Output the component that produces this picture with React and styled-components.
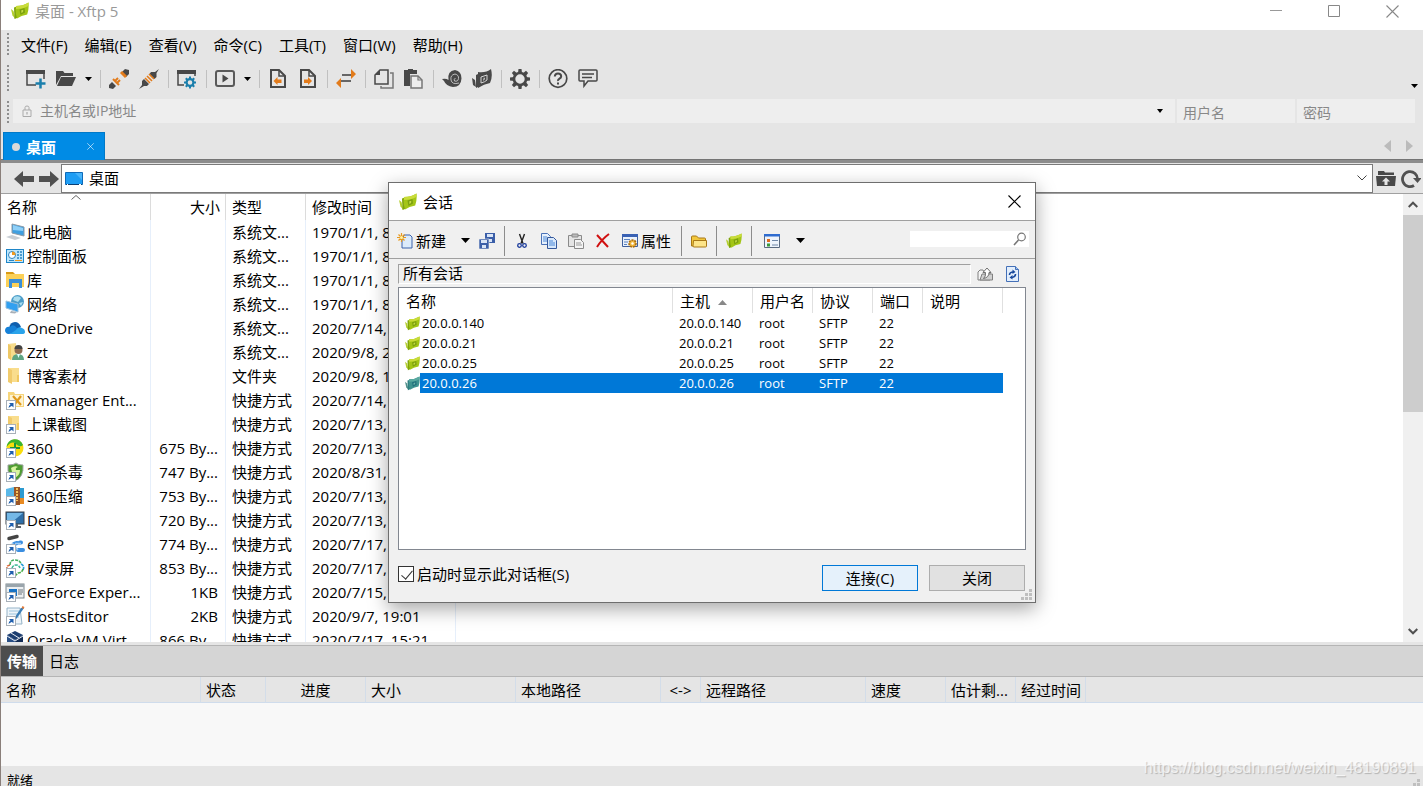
import React, { useState } from 'react';
import styled, { createGlobalStyle } from 'styled-components';

const menus = ['文件(F)', '编辑(E)', '查看(V)', '命令(C)', '工具(T)', '窗口(W)', '帮助(H)'];

const files = [
  { icon: 'computer', name: '此电脑', size: '', type: '系统文...', time: '1970/1/1, 8:00' },
  { icon: 'panel', name: '控制面板', size: '', type: '系统文...', time: '1970/1/1, 8:00' },
  { icon: 'library', name: '库', size: '', type: '系统文...', time: '1970/1/1, 8:00' },
  { icon: 'network', name: '网络', size: '', type: '系统文...', time: '1970/1/1, 8:00' },
  { icon: 'cloud', name: 'OneDrive', size: '', type: '系统文...', time: '2020/7/14,' },
  { icon: 'user', name: 'Zzt', size: '', type: '系统文...', time: '2020/9/8, 2' },
  { icon: 'folder', name: '博客素材', size: '', type: '文件夹', time: '2020/9/8, 1' },
  { icon: 'xmanager', name: 'Xmanager Ent...', size: '', type: '快捷方式', time: '2020/7/14,', link: true },
  { icon: 'folder', name: '上课截图', size: '', type: '快捷方式', time: '2020/7/13,', link: true },
  { icon: 'safe', name: '360', size: '675 By...', type: '快捷方式', time: '2020/7/13,', link: true },
  { icon: 'antivirus', name: '360杀毒', size: '747 By...', type: '快捷方式', time: '2020/8/31,', link: true },
  { icon: 'zip', name: '360压缩', size: '753 By...', type: '快捷方式', time: '2020/7/13,', link: true },
  { icon: 'desk', name: 'Desk', size: '720 By...', type: '快捷方式', time: '2020/7/13,', link: true },
  { icon: 'ensp', name: 'eNSP', size: '774 By...', type: '快捷方式', time: '2020/7/17,', link: true },
  { icon: 'recorder', name: 'EV录屏', size: '853 By...', type: '快捷方式', time: '2020/7/17,', link: true },
  { icon: 'geforce', name: 'GeForce Exper...', size: '1KB', type: '快捷方式', time: '2020/7/15,', link: true },
  { icon: 'hosts', name: 'HostsEditor', size: '2KB', type: '快捷方式', time: '2020/9/7, 19:01', link: true },
  { icon: 'vbox', name: 'Oracle VM Virt...', size: '866 By...', type: '快捷方式', time: '2020/7/17, 15:21' },
];

const sessions = [
  { host: '20.0.0.140', user: 'root', protocol: 'SFTP', port: '22' },
  { host: '20.0.0.21', user: 'root', protocol: 'SFTP', port: '22' },
  { host: '20.0.0.25', user: 'root', protocol: 'SFTP', port: '22' },
  { host: '20.0.0.26', user: 'root', protocol: 'SFTP', port: '22' },
];

const transferColumns = [
  { title: '名称', width: 200 },
  { title: '状态', width: 65 },
  { title: '进度', width: 100, center: true },
  { title: '大小', width: 150 },
  { title: '本地路径', width: 145 },
  { title: '<->', width: 40, center: true },
  { title: '远程路径', width: 165 },
  { title: '速度', width: 80 },
  { title: '估计剩...', width: 70 },
  { title: '经过时间', width: 70 },
];

// the green card used for the app and for every session
const XftpIcon = ({ size = 18, dim }) => (
  <svg width={size} height={size} viewBox="0 0 18 18" aria-hidden="true">
    <path d="M0 7l2.500 2 2 8-3-3.500z" fill={dim ? '#4f8f8a' : '#b4cf2e'} />
    <path d="M3 5.500l3-1v11.500l-2.500 1z" fill={dim ? '#2f7f80' : '#7fa40c'} />
    <path d="M5 4q7 0 12.500-3.500.7 6.500-1.300 12-6 1-10.200 4-2-6-1-12.500z" fill={dim ? '#3f9390' : '#a3c517'} />
    <path d="M5 4q7 0 12.500-3.500l-.2 3.500q-5 3-12.300 3z" fill={dim ? '#5aa9a0' : '#c9dc3a'} />
    <path d="M8.500 7.500l5-1.500.5 4.500-4.500 2.500z" fill={dim ? '#20707c' : '#7ba00e'} />
    <path d="M10.300 8.300l2-.5-.2 2.200-1.800.9z" fill={dim ? '#6cb4aa' : '#c4da45'} />
  </svg>
);

const Caret = ({ w = 7 }) => (
  <svg width={w} height={w === 9 ? 5 : 4} viewBox="0 0 8 4" preserveAspectRatio="none" aria-hidden="true">
    <path d="M0 0h8l-4 4z" fill="#000" />
  </svg>
);

const G = '#484848';
const gearTeeth = [0, 45, 90, 135, 180, 225, 270, 315];

const toolIcons = {
  newSession: (
    <>
      <path d="M1 2v14h9M18 2v8" stroke={G} strokeWidth="1.500" fill="none" />
      <path d="M0 1h19v4H0z" fill={G} />
      <path d="M14.500 9.500v10M9.500 14.500h10" stroke="#1b7fac" strokeWidth="2.500" />
    </>
  ),
  open: (
    <>
      <path d="M0 16V2h7l1.500 2H17v3H5z" fill={G} />
      <path d="M5 8h15l-4 9H1z" fill={G} />
    </>
  ),
  disconnect: (
    <>
      <path d="M13 3l3-3 4 1v4l-3 3z" fill={G} />
      <path d="M12 3l5 5" stroke="#e27b1b" strokeWidth="3" />
      <path d="M0 16l3-3 4 4-3 3-4-1z" fill={G} />
      <path d="M4 10l6 6M6 12l3-3M8 14l3-3" stroke="#e27b1b" strokeWidth="2" />
    </>
  ),
  plug: (
    <>
      <path d="M20 0l-4 3-4 0-1.500 2 5 5 2-2v-4z" fill={G} />
      <path d="M0 20l3-4v-4l2-2 5 5-2 2H5z" fill={G} />
      <path d="M6 9l5 5M8 7l5 5M10 5l5 5" stroke="#e27b1b" strokeWidth="1.600" />
    </>
  ),
  windowGear: (
    <>
      <path d="M1 2v14h6M18 2v5" stroke={G} strokeWidth="1.500" fill="none" />
      <path d="M0 1h19v4H0z" fill={G} />
      <circle cx="13" cy="13.500" r="3.400" fill="none" stroke="#1b7fac" strokeWidth="2.200" />
      {gearTeeth.map((a) => (
        <path key={a} d="M12 7.500h2v2.500h-2z" fill="#1b7fac" transform={`rotate(${a} 13 13.500)`} />
      ))}
    </>
  ),
  play: (
    <>
      <rect x="1" y="2" width="18" height="15" rx="2" fill="none" stroke="#5a5a5a" strokeWidth="2" />
      <path d="M7.500 5.500l6 4-6 4z" fill={G} />
    </>
  ),
  docLeft: (
    <>
      <path d="M3 1h8l6 6v11H3z" fill="none" stroke={G} strokeWidth="2" />
      <path d="M11 1v6h6" fill="none" stroke={G} strokeWidth="1.500" />
      <path d="M5.500 12l4-4v2.500h4v3.500h-4v2z" fill="#e27b1b" />
    </>
  ),
  docRight: (
    <>
      <path d="M3 1h8l6 6v11H3z" fill="none" stroke={G} strokeWidth="2" />
      <path d="M11 1v6h6" fill="none" stroke={G} strokeWidth="1.500" />
      <path d="M14 12l-4-4v2.500H6v3.500h4v2z" fill="#e27b1b" />
    </>
  ),
  transfer: (
    <>
      <path d="M15 0l5 5-5 5zM5 9v10l-5-5z" fill="#e27b1b" />
      <path d="M6 6h9M5 12h10" stroke="#666" strokeWidth="1.800" />
    </>
  ),
  copy: (
    <>
      <path d="M6 1h8v14H1V6z" fill="none" stroke={G} strokeWidth="1.500" />
      <path d="M6 1v5H1z" fill={G} />
      <path d="M16 4h3v15H7v-2" fill="none" stroke="#777" strokeWidth="1.500" />
    </>
  ),
  paste: (
    <>
      <path d="M0 1h4V0h5v1h4v4H6v12H0z" fill={G} />
      <path d="M7 7h7l4 4v8H7z" fill="#eee" stroke="#777" strokeWidth="1.500" />
      <path d="M14 7v4h4" fill="none" stroke="#777" strokeWidth="1.200" />
    </>
  ),
  shell: (
    <>
      <path d="M0 10q4-1 6.500 1Q5 2 13 1q6.500 1 6.500 8.500Q19 18 11 18 4 17 2 12z" fill={G} />
      <path d="M17 14q-7 2-8-3t4-6q4 1 3.500 4.500T12.500 12q-1-2 1-3" fill="none" stroke="#c8c8c8" strokeWidth=".9" />
    </>
  ),
  xftp: (
    <>
      <path d="M0 9l3 2 1 7-3-2z" fill={G} />
      <path d="M4 6l2-1v13l-2 1z" fill={G} />
      <path d="M6 3q8 1 13-3 2 8-1 14-6 1-12 5z" fill={G} />
      <path d="M9 8l6-2v5q-2 2-6 3z" fill="none" stroke="#d5d5d5" strokeWidth="1" />
      <path d="M12 8l1 2-2 2z" fill="#ddd" />
    </>
  ),
  gear: (
    <>
      <circle cx="10" cy="10" r="6" fill="none" stroke={G} strokeWidth="2.600" />
      {gearTeeth.map((a) => (
        <path key={a} d="M8.500 0h3l.5 4H8z" fill={G} transform={`rotate(${a} 10 10)`} />
      ))}
    </>
  ),
  help: (
    <>
      <circle cx="10" cy="9.500" r="8.800" fill="none" stroke={G} strokeWidth="1.700" />
      <path d="M6.800 7.500q.2-3 3.200-3t3.200 2.700q0 1.500-1.700 2.500T10 12" fill="none" stroke={G} strokeWidth="2" />
      <path d="M9 13.500h2v2H9z" fill={G} />
    </>
  ),
  chat: (
    <>
      <path d="M2 1h16q1 0 1 1v9q0 1-1 1h-8l-4 5v-5H2q-1 0-1-1V2q0-1 1-1z" fill="none" stroke={G} strokeWidth="1.500" />
      <path d="M4 5h12M4 8.500h10" stroke={G} strokeWidth="1.300" />
    </>
  ),
  back: <path d="M0 10l9-8v5h11v6H9v5z" fill="#505050" />,
  forward: <path d="M20 10l-9-8v5H0v6h11v5z" fill="#505050" />,
  folderUp: (
    <>
      <path d="M2 2h6l1 1.500h9V6H2z" fill={G} />
      <path d="M0 7h20l-1 10H1z" fill={G} />
      <path d="M10 8.500l4 4h-2.500v3.500h-3v-3.500H6z" fill="#e5e5e5" />
    </>
  ),
  refresh: (
    <>
      <path d="M16.500 10.500A7.500 7.500 0 1 0 13 16.500" fill="none" stroke="#505050" strokeWidth="2.800" />
      <path d="M12 9h8.500l-4 5z" fill="#505050" />
    </>
  ),
};

const ToolIcon = ({ name }) => (
  <svg width="20" height="20" viewBox="0 0 20 20" aria-hidden="true">{toolIcons[name]}</svg>
);

const fileIcons = {
  computer: (
    <>
      <path d="M7 2l12 3v9L7 11z" fill="#3f9fe0" stroke="#8a9aa8" />
      <path d="M8 3l10 3v3L8 8z" fill="#8fd0f8" />
      <path d="M1 15l6-2 9 3-6 2z" fill="#c8ced4" />
    </>
  ),
  panel: (
    <>
      <rect x="1" y="3" width="18" height="14" fill="#1f86c8" />
      <rect x="2" y="4" width="16" height="12" fill="#bfe6fb" />
      <circle cx="7" cy="9" r="3.500" fill="#fff" stroke="#2c84c0" />
      <path d="M7 9V5.500A3.500 3.500 0 0 1 10.500 9z" fill="#f29a1c" />
      <path d="M12 6h2M15 6h2M12 9h2M15 9h2M12 12h2M15 12h2" stroke="#2c84c0" strokeWidth="1.500" />
      <path d="M4 14.500h5" stroke="#2c84c0" /><path d="M10 14.500h7" stroke="#f29a1c" />
    </>
  ),
  library: (
    <>
      <path d="M1 2h7l2 2h-9z" fill="#d99a16" />
      <path d="M1 4h18v13H1z" fill="#fbd058" />
      <path d="M4 18v-9h13v9h-3v-5H7v5z" fill="#3a8fd8" />
    </>
  ),
  network: (
    <>
      <circle cx="12.500" cy="7.500" r="6.500" fill="#4b9cc8" />
      <path d="M9 3q5-2 7 1l-3 4-5-2zM14 9l4-1-2 4z" fill="#a9dcee" />
      <path d="M1 7l12 3v8L1 14z" fill="#32a0f0" stroke="#9ac0dc" />
      <path d="M6 17l6 1-2 1.500-5-.5z" fill="#a8b0b8" />
    </>
  ),
  cloud: (
    <>
      <path d="M4 10q1-6 6-6 4 0 6 5l-6 4z" fill="#0f5fae" />
      <path d="M3 16q-3-1-3-4 1-4 5-3 2-3 5-1l7 7z" fill="#1681d8" />
      <path d="M5 16l6-4q2-4 6-2 3 1 3 4 0 2-3 2z" fill="#2aa3ea" />
    </>
  ),
  user: (
    <>
      <path d="M3 2l8-1v15l-5 2-3-2z" fill="#f7dc8c" /><path d="M3 2l3 2v14l-3-2z" fill="#eec764" />
      <circle cx="13.500" cy="8" r="4" fill="#8f6b50" /><path d="M9.500 7q0-4 4-4t4 4z" fill="#444" />
      <path d="M7 18q0-6 6-6t6 6z" fill="#5fa583" /><path d="M12 12h3l-1.500 4z" fill="#dff" />
    </>
  ),
  folder: (
    <>
      <path d="M3 2h11v14H3z" fill="#f9dd8d" /><path d="M3 2l4 2v14l-4-2z" fill="#f1cb6c" />
      <path d="M12 9h2v7h-2z" fill="#f0c75f" />
    </>
  ),
  xmanager: (
    <>
      <path d="M3 2h6l1 2h9v13H3z" fill="#f6d57b" /><path d="M5 5h13v11H5z" fill="#fdf3d2" />
      <path d="M8 6l8 9M16 6l-7 9" stroke="#e09a1c" strokeWidth="2.200" />
    </>
  ),
  safe: (
    <>
      <circle cx="10" cy="10" r="8.500" fill="#f9dc0c" />
      <path d="M1.500 9A8.500 8.500 0 0 1 18 7q-3 3-7-1T1.500 9z" fill="#3bb32f" />
      <path d="M10 5v10M5 10h10" stroke="#17963c" strokeWidth="2" />
    </>
  ),
  antivirus: (
    <>
      <path d="M3 3q6 0 8-2 2 2 7 2 1 12-8 16Q2 15 3 3z" fill="#4f9c33" stroke="#9da4a0" />
      <path d="M6 6q4-3 7-1-3 1-2 3h4q0 6-6 8 2-5-2-6z" fill="#d8f4a0" />
    </>
  ),
  zip: (
    <>
      <path d="M1 3l8-2v17H1z" fill="#5ab8e8" /><path d="M12 2h7v16h-7z" fill="#2c9ad0" />
      <path d="M1 12h18v6H1z" fill="#e88a22" /><path d="M9 1h6v18H9z" fill="#9a5626" />
      <path d="M12 2v13" stroke="#f5c25b" strokeWidth="2" strokeDasharray="2 1" />
    </>
  ),
  desk: (
    <>
      <rect x="1" y="2" width="18" height="12" fill="#2f6fa8" stroke="#384048" />
      <path d="M2 3h16L6 13H2z" fill="#74b8e6" />
      <path d="M8 14h5v2h3v2H6v-2h2z" fill="#5c646c" />
    </>
  ),
  ensp: (
    <>
      <path d="M4 4.500l8-2" stroke="#444" strokeWidth="3.500" strokeLinecap="round" />
      <path d="M9 10l3-1M15 8.500l1 0M13 16l5 0" stroke="#3b8ee0" strokeWidth="4" strokeLinecap="round" />
      <path d="M7 9l6 7M10 9.500h6" stroke="#9cc9f3" strokeWidth="1.600" />
    </>
  ),
  recorder: (
    <g fill="none" strokeWidth="1.600" strokeDasharray="3 1">
      <path d="M5 7q0-5 5-5t6 4" stroke="#3fae5c" /><path d="M3 12q-3-4 2-5" stroke="#d86a3a" />
      <path d="M16 6q4 2 2 6" stroke="#2b9fd8" /><path d="M18 11q-1 4-5 4l-3 3" stroke="#4aae4c" />
      <path d="M7 10q1-3 4-3t4 3" stroke="#3bb894" />
    </g>
  ),
  geforce: (
    <>
      <rect x="1" y="2" width="18" height="14" fill="#eceff1" stroke="#7d878e" />
      <path d="M1 2h18v3H1z" fill="#9aa5ac" /><path d="M4 7h8v7H4z" fill="#1873c5" />
      <path d="M13 8h5M13 10h5M13 12h4" stroke="#6b757c" />
    </>
  ),
  hosts: (
    <>
      <path d="M2 2h13l2 16H2z" fill="#eef5fa" stroke="#96b4c8" />
      <path d="M4 5h10M4 8h10M4 11h10" stroke="#9cc4dc" />
      <path d="M19 2l-7 10-3 3 1-4 6-9z" fill="#3b7fb8" /><path d="M17 1l2 1" stroke="#e07a3a" strokeWidth="2" />
    </>
  ),
  vbox: (
    <>
      <path d="M2 5l8-4 8 4-8 5z" fill="#1d3e70" /><path d="M2 5l8 5v9l-8-5z" fill="#294f86" />
      <path d="M18 5l-8 5v9l8-5z" fill="#122b54" /><path d="M2 6l8 5 8-5M6 3l8 5" stroke="#e8eef6" fill="none" />
    </>
  ),
};

const FileIcon = ({ name, link }) => (
  <svg width="20" height="20" viewBox="0 0 20 20" aria-hidden="true">
    {fileIcons[name]}
    {link && (
      <>
        <rect x="1.500" y="10.500" width="9" height="9" fill="#fff" stroke="#a8b0b8" />
        <path d="M4 13h4.500v4.500zM3.500 18q0-2.500 2.500-4l1.500 1.500q-2.500 1-4 2.500z" fill="#1f5fae" />
      </>
    )}
  </svg>
);

const dialogIcons = {
  new: (
    <>
      <path d="M7 2h6l2 2v11H5V7z" fill="#dcebfb" stroke="#3b62ac" />
      <path d="M4.500 0v9M0 4.500h9M1.500 1.500l6 6M7.500 1.500l-6 6" stroke="#e89a20" strokeWidth="1.200" />
      <circle cx="4.500" cy="4.500" r="1.500" fill="#fff3a0" />
    </>
  ),
  save: (
    <>
      <path d="M6 0h10v10H6z" fill="#3a5ea8" /><path d="M8 1h6v3H8zM9 6h4v3H9z" fill="#d8e4f6" />
      <path d="M0 6h10v10H0z" fill="#3a5ea8" stroke="#f0f0f0" strokeWidth=".6" /><path d="M2 7h6v3H2zM3 12h4v3H3z" fill="#d8e4f6" />
    </>
  ),
  cut: (
    <>
      <path d="M5.500 1l3.500 9.500M10.500 1L7 10.500" stroke="#222" strokeWidth="1.400" />
      <circle cx="5.500" cy="12.500" r="1.800" fill="none" stroke="#1c3c9c" strokeWidth="1.300" />
      <circle cx="10.500" cy="12.500" r="1.800" fill="none" stroke="#1c3c9c" strokeWidth="1.300" />
    </>
  ),
  copy: (
    <>
      <path d="M.5.5h6l3 3v8h-9z" fill="#e6f0fc" stroke="#4a72b8" /><path d="M2 4h4M2 6h5M2 8h5" stroke="#4a88d8" />
      <path d="M6.500 4.500h6l3 3v8h-9z" fill="#d8e8fb" stroke="#34589c" /><path d="M8 8h4M8 10h6M8 12h6" stroke="#4a88d8" />
    </>
  ),
  paste: (
    <>
      <path d="M.5 2.500h13v11H.5z" fill="#e4e4e4" stroke="#8a8a8a" /><path d="M4 1h6v3H4z" fill="#bbb" stroke="#8a8a8a" />
      <path d="M6.500 6.500h6l3 3v6h-9z" fill="#f4f4f4" stroke="#8a8a8a" /><path d="M8 10h5M8 12h6" stroke="#999" />
    </>
  ),
  remove: <path d="M2 2l11 12M14 1Q7 6 2 14" stroke="#d01010" strokeWidth="2" fill="none" />,
  props: (
    <>
      <path d="M.5 1.500h15v12H.5z" fill="#eaf2fc" stroke="#40609c" /><path d="M0 1h16v3H0z" fill="#3a62b4" />
      <path d="M2 6.500h6M2 9h4M2 11.500h3" stroke="#5c82c0" />
      <circle cx="10.500" cy="10.500" r="3.500" fill="#f0b63c" stroke="#a86a12" strokeDasharray="2 1" strokeWidth="1.600" />
      <circle cx="10.500" cy="10.500" r="1.200" fill="#fff" />
    </>
  ),
  folder: (
    <>
      <path d="M.5 13V4q0-1 1-1h4l2 2h6q1 0 1 1v7z" fill="#f2c73c" stroke="#a87818" />
      <path d="M2.500 7.500h13V13q0 1-1 1H3q-1 0-1-1z" fill="#fde58a" stroke="#a87818" />
    </>
  ),
  list: (
    <>
      <path d="M.5 1.500h15v13H.5z" fill="#eef4fc" stroke="#5a6a80" /><path d="M0 1h16v2.500H0z" fill="#2f6cd0" />
      <path d="M3 6h3v3H3z" fill="#e06a1c" /><path d="M3 10.500h3v3H3z" fill="#3a9a3a" />
      <path d="M8 7.500h6M8 12h6" stroke="#7088a8" />
    </>
  ),
  up: (
    <>
      <path d="M1 14V6l2-2h3l1 2h6v8z" fill="#f4f4f4" stroke="#808080" />
      <path d="M3 14l2-6h10.500v6z" fill="#d0d0d0" stroke="#808080" />
      <path d="M10 2l4 4.500h-2q0 5-5.500 6 2.500-2 2-6H6z" fill="#fff" stroke="#707070" />
    </>
  ),
  reload: (
    <>
      <path d="M2.500.5h9l3 3v12h-12z" fill="#e2eefc" stroke="#4470b8" /><path d="M11.500.5v3h3" fill="#9cc0ee" stroke="#4470b8" />
      <path d="M5.500 9q0-3 4-3M11.500 8q0 3-4 3.500" stroke="#17489c" strokeWidth="1.600" fill="none" />
      <path d="M8.500 3.500l3 2.500-3 2zM8.500 9l-3 2.500 3 2z" fill="#17489c" />
    </>
  ),
};

const SmallIcon = ({ name }) => (
  <svg width="16" height="16" viewBox="0 0 16 16" aria-hidden="true">{dialogIcons[name]}</svg>
);

const CloseGlyph = ({ size = 13, color = '#000' }) => (
  <svg width={size} height={size} viewBox="0 0 13 13" aria-hidden="true">
    <path d="M.5.5l12 12M12.500.5l-12 12" stroke={color} strokeWidth="1.100" />
  </svg>
);

const Tool = ({ name, label }) => (
  <ToolButton aria-label={label}><ToolIcon name={name} /></ToolButton>
);

const GripCorner = () => (
  <ResizeGrip width="11" height="11" viewBox="0 0 11 11" aria-hidden="true">
    <path d="M8 0h3v3H8zM8 4h3v3H8zM8 8h3v3H8zM4 4h3v3H4zM4 8h3v3H4zM0 8h3v3H0z" fill="#bfbfbf" />
  </ResizeGrip>
);

const SessionDialog = () => {
  const [selected, setSelected] = useState(3);
  const [showOnStart, setShowOnStart] = useState(true);

  return (
    <Overlay>
      <Dialog role="dialog" aria-label="会话">
        <DialogTitle>
          <XftpIcon />
          <h2>会话</h2>
          <PlainButton aria-label="关闭"><CloseGlyph /></PlainButton>
        </DialogTitle>
        <DialogToolbar>
          <TextButton><SmallIcon name="new" />新建</TextButton>
          <CaretButton $left={15} aria-label="新建"><Caret w={9} /></CaretButton>
          <IconButton aria-label="保存"><SmallIcon name="save" /></IconButton>
          <DialogSeparator />
          <IconButton aria-label="剪切"><SmallIcon name="cut" /></IconButton>
          <IconButton aria-label="复制"><SmallIcon name="copy" /></IconButton>
          <IconButton aria-label="粘贴"><SmallIcon name="paste" /></IconButton>
          <IconButton aria-label="删除"><SmallIcon name="remove" /></IconButton>
          <TextButton $pad={6}><SmallIcon name="props" />属性</TextButton>
          <DialogSeparator />
          <IconButton aria-label="文件夹"><SmallIcon name="folder" /></IconButton>
          <DialogSeparator />
          <IconButton aria-label="Xftp"><XftpIcon size={16} /></IconButton>
          <DialogSeparator />
          <IconButton $wide aria-label="列表"><SmallIcon name="list" /></IconButton>
          <CaretButton $left={7} aria-label="列表"><Caret w={9} /></CaretButton>
          <SearchBox>
            <input aria-label="搜索" />
            <svg width="14" height="14" viewBox="0 0 14 14" aria-hidden="true">
              <circle cx="8.500" cy="5" r="3.800" fill="none" stroke="#777" strokeWidth="1.200" />
              <path d="M5.500 8L1 13" stroke="#777" strokeWidth="1.600" />
            </svg>
          </SearchBox>
        </DialogToolbar>
        <PathRow>
          <PathLabel>所有会话</PathLabel>
          <IconButton aria-label="向上"><SmallIcon name="up" /></IconButton>
          <IconButton aria-label="刷新"><SmallIcon name="reload" /></IconButton>
        </PathRow>
        <SessionBox>
          <SessionTable>
            <colgroup>
              <col width="274" /><col width="80" /><col width="60" /><col width="60" /><col width="50" /><col width="80" />
            </colgroup>
            <thead>
              <tr>
                <th>名称</th>
                <th>
                  主机
                  <svg width="9" height="5" viewBox="0 0 9 5" aria-hidden="true"><path d="M0 5h9L4.500 0z" fill="#888" /></svg>
                </th>
                <th>用户名</th>
                <th>协议</th>
                <th>端口</th>
                <th>说明</th>
              </tr>
            </thead>
            <tbody>
              {sessions.map((s, i) => (
                <SessionRow key={s.host} $selected={i === selected} onClick={() => setSelected(i)}>
                  <td>
                    <SessionName $selected={i === selected}>
                      <XftpIcon size={15} dim={i === selected} />
                      <span>{s.host}</span>
                    </SessionName>
                  </td>
                  <td>{s.host}</td>
                  <td>{s.user}</td>
                  <td>{s.protocol}</td>
                  <td>{s.port}</td>
                  <td />
                </SessionRow>
              ))}
            </tbody>
          </SessionTable>
        </SessionBox>
        <DialogFooter>
          <CheckLabel>
            <input type="checkbox" checked={showOnStart} onChange={(e) => setShowOnStart(e.target.checked)} />
            启动时显示此对话框(S)
          </CheckLabel>
          <DialogButton $primary>连接(C)</DialogButton>
          <DialogButton>关闭</DialogButton>
        </DialogFooter>
        <GripCorner />
      </Dialog>
    </Overlay>
  );
};

const App = () => {
  const [host, setHost] = useState('');
  return (
    <Window>
      <GlobalStyle />
      <TitleBar>
        <XftpIcon />
        <h1>桌面 - Xftp 5</h1>
        <WindowButton aria-label="最小化">
          <svg width="13" height="13" viewBox="0 0 13 13" aria-hidden="true"><path d="M0 5.500h12" stroke="#999" /></svg>
        </WindowButton>
        <WindowButton aria-label="最大化">
          <svg width="13" height="13" viewBox="0 0 13 13" aria-hidden="true"><path d="M.5.5h11v11H.5z" fill="none" stroke="#888" /></svg>
        </WindowButton>
        <WindowButton aria-label="关闭"><CloseGlyph color="#888" /></WindowButton>
      </TitleBar>

      <MenuBar>
        <Grip />
        {menus.map((m) => <MenuButton key={m}>{m}</MenuButton>)}
      </MenuBar>

      <Toolbar>
        <Grip />
        <Tool name="newSession" label="新建" />
        <Tool name="open" label="打开" />
        <ToolCaret aria-label="打开"><Caret /></ToolCaret>
        <Separator />
        <Tool name="disconnect" label="断开" />
        <Tool name="plug" label="重新连接" />
        <Separator />
        <Tool name="windowGear" label="属性" />
        <Separator />
        <Tool name="play" label="运行" />
        <ToolCaret aria-label="运行"><Caret /></ToolCaret>
        <Separator />
        <Tool name="docLeft" label="下载" />
        <Tool name="docRight" label="上传" />
        <Separator />
        <Tool name="transfer" label="传输" />
        <Separator />
        <Tool name="copy" label="复制" />
        <Tool name="paste" label="粘贴" />
        <Separator />
        <Tool name="shell" label="Xshell" />
        <Tool name="xftp" label="Xftp" />
        <Separator />
        <Tool name="gear" label="选项" />
        <Separator />
        <Tool name="help" label="帮助" />
        <Tool name="chat" label="反馈" />
        <Overflow aria-label="更多"><Caret /></Overflow>
      </Toolbar>

      <ConnectBar>
        <Grip />
        <HostField>
          <svg width="10" height="12" viewBox="0 0 10 12" aria-hidden="true">
            <path d="M1 5h8v6.500H1zM3 5V2.500q0-1.500 2-1.500t2 1.500V5" fill="none" stroke="#aaa" />
            <path d="M4.500 7h1v2.500h-1z" fill="#999" />
          </svg>
          <input
            aria-label="主机名或IP地址"
            placeholder="主机名或IP地址"
            value={host}
            onChange={(e) => setHost(e.target.value)}
          />
          <PlainButton aria-label="历史"><Caret w={6} /></PlainButton>
        </HostField>
        <SmallField aria-label="用户名" placeholder="用户名" />
        <SmallField aria-label="密码" placeholder="密码" type="password" />
      </ConnectBar>

      <TabStrip>
        <Tab>
          <Dot />
          <span>桌面</span>
          <PlainButton aria-label="关闭"><CloseGlyph size={7} color="#fff" /></PlainButton>
        </Tab>
        <TabScroll>
          <PlainButton aria-label="左">
            <svg width="7" height="12" viewBox="0 0 7 12" aria-hidden="true"><path d="M7 0v12L0 6z" fill="#bbb" /></svg>
          </PlainButton>
          <PlainButton aria-label="右">
            <svg width="7" height="12" viewBox="0 0 7 12" aria-hidden="true"><path d="M0 0v12l7-6z" fill="#bbb" /></svg>
          </PlainButton>
        </TabScroll>
      </TabStrip>

      <NavBar>
        <NavButton aria-label="后退"><ToolIcon name="back" /></NavButton>
        <NavButton aria-label="前进"><ToolIcon name="forward" /></NavButton>
        <Location>
          <svg width="18" height="13" viewBox="0 0 18 13" aria-hidden="true">
            <path d="M.5.5h17v12H.5z" fill="#1e9df4" stroke="#0f6ab8" />
            <path d="M10 1h7v7z" fill="#48b4fa" />
            <path d="M1 12.500h16" stroke="#0a3f74" /><path d="M2 12.500h1M14 12.500h2" stroke="#fff" />
          </svg>
          <select aria-label="位置"><option>桌面</option></select>
          <svg width="10" height="6" viewBox="0 0 10 6" aria-hidden="true">
            <path d="M.5.5L5 5 9.500.5" fill="none" stroke="#444" />
          </svg>
        </Location>
        <NavButton aria-label="上一级"><ToolIcon name="folderUp" /></NavButton>
        <NavButton aria-label="刷新"><ToolIcon name="refresh" /></NavButton>
      </NavBar>

      <FilePane>
        <FileScroll>
          <FileTable>
            <colgroup><col width="150" /><col width="75" /><col width="80" /><col width="150" /></colgroup>
            <thead>
              <tr>
                <th>
                  名称
                  <SortMark width="10" height="5" viewBox="0 0 10 5" aria-hidden="true">
                    <path d="M.5 4.500L5 .5l4.500 4" fill="none" stroke="#666" />
                  </SortMark>
                </th>
                <th>大小</th>
                <th>类型</th>
                <th>修改时间</th>
              </tr>
            </thead>
            <tbody>
              {files.map((f) => (
                <tr key={f.name}>
                  <td><FileName><FileIcon name={f.icon} link={f.link} />{f.name}</FileName></td>
                  <td>{f.size}</td>
                  <td>{f.type}</td>
                  <td>{f.time}</td>
                </tr>
              ))}
            </tbody>
          </FileTable>
        </FileScroll>
        <ScrollBar>
          <PlainButton aria-label="向上滚动">
            <svg width="10" height="7" viewBox="0 0 10 7" aria-hidden="true"><path d="M.7 6L5 1.700 9.300 6" fill="none" stroke="#505050" strokeWidth="2" /></svg>
          </PlainButton>
          <Thumb />
          <PlainButton aria-label="向下滚动">
            <svg width="10" height="7" viewBox="0 0 10 7" aria-hidden="true"><path d="M.7 1L5 5.300 9.300 1" fill="none" stroke="#505050" strokeWidth="2" /></svg>
          </PlainButton>
        </ScrollBar>
      </FilePane>

      <BottomTabs>
        <BottomTab $active>传输</BottomTab>
        <BottomTab>日志</BottomTab>
      </BottomTabs>
      <TransferPane>
        <TransferTable>
          <colgroup>
            {transferColumns.map((c) => <col key={c.title} width={c.width} />)}
            <col />
          </colgroup>
          <thead>
            <tr>
              {transferColumns.map((c) => <TransferHead key={c.title} $center={c.center}>{c.title}</TransferHead>)}
              <td />
            </tr>
          </thead>
        </TransferTable>
      </TransferPane>
      <StatusBar>
        就绪
        <GripCorner />
      </StatusBar>
      <Watermark>https://blog.csdn.net/weixin_48190891</Watermark>
      <SessionDialog />
    </Window>
  );
};

export default App;

const GlobalStyle = createGlobalStyle`
  *{
    box-sizing:border-box;
  }
  body{
    margin:0;
    font-family:"Open Sans", "Noto Sans CJK SC", sans-serif;
    font-size:15px;
    line-height:20px;
    color:#000;
    overflow:hidden;
  }
  h1, h2{
    margin:0;
    font-size:15px;
    font-weight:normal;
  }
  button, input, select{
    font:inherit;
    color:inherit;
    border:none;
    padding:0;
    background:none;
    border-radius:0;
    outline:none;
  }
  svg{
    display:block;
    flex-shrink:0;
  }
`

const Window = styled.div`
  position:relative;
  display:flex;
  flex-direction:column;
  height:100vh;
  background-color:#e5e5e5;
  border-left:1px solid #8a7f7a;
  overflow:hidden;
`

const TitleBar = styled.header`
  display:flex;
  align-items:center;
  height:30px;
  padding:0 2px 8px 10px;
  background-color:white;
  color:#999;
  h1{
    flex:1;
    padding-left:6px;
  }
`

const PlainButton = styled.button`
  display:flex;
  align-items:center;
  justify-content:center;
`

const WindowButton = styled(PlainButton)`
  width:58px;
  height:22px;
`

const Grip = styled.span`
  width:2px;
  align-self:stretch;
  margin:3px 12px 3px 6px;
  background:repeating-linear-gradient(#8e8e8e 0 2px, transparent 2px 4px);
`

const MenuBar = styled.nav`
  display:flex;
  align-items:center;
  height:32px;
  padding-bottom:2px;
`

const MenuButton = styled.button`
  margin-right:17px;
  white-space:nowrap;
`

const Toolbar = styled.div`
  display:flex;
  align-items:center;
  height:34px;
`

const ToolButton = styled(PlainButton)`
  width:30px;
  height:30px;
`

const ToolCaret = styled(PlainButton)`
  width:15px;
  height:30px;
`

const Separator = styled.span`
  width:8px;
  height:18px;
  background:linear-gradient(#c0c0c0, #c0c0c0) center / 1px 100% no-repeat;
`

const Overflow = styled(PlainButton)`
  align-self:flex-end;
  height:20px;
  margin:0 5px 0 auto;
`

const ConnectBar = styled.div`
  display:flex;
  gap:2px;
  height:32px;
  padding:3px 8px 5px 0;
  font-size:14px;
  ${Grip}{
    margin:2px 2px 0 6px;
  }
  input::placeholder{
    color:#888;
    opacity:1;
  }
`

const HostField = styled.div`
  display:flex;
  flex:1;
  align-items:center;
  padding:0 12px 0 9px;
  background-color:#eee;
  input{
    flex:1;
    padding-left:8px;
  }
`

const SmallField = styled.input`
  width:118px;
  padding:4px 6px 0;
  background-color:#eee;
`

const TabStrip = styled.div`
  display:flex;
  align-items:flex-end;
  justify-content:space-between;
  height:35px;
  padding-left:2px;
  border-bottom:3px solid #8c8c8c;
  box-shadow:inset 0 -1px #747474;
`

const Tab = styled.div`
  display:flex;
  align-items:center;
  width:102px;
  height:28px;
  padding:0 10px 0 8px;
  border:1px solid #0079c8;
  border-bottom:none;
  background-color:#008be5;
  color:white;
  font-weight:bold;
  span{
    flex:1;
  }
`

const Dot = styled.i`
  width:8px;
  height:8px;
  margin-right:6px;
  border-radius:50%;
  background-color:#d9d9d9;
`

const TabScroll = styled.div`
  display:flex;
  gap:15px;
  padding:0 10px 8px;
`

const NavBar = styled.div`
  display:flex;
  align-items:center;
  height:31px;
  padding:1px 0 0 10px;
  border-bottom:1px solid #a0a0a0;
`

const NavButton = styled(PlainButton)`
  width:25px;
  height:28px;
`

const Location = styled.div`
  display:flex;
  flex:1;
  align-items:center;
  align-self:stretch;
  padding:0 5px 1px 3px;
  border:1px solid #7a7a7a;
  background-color:white;
  select{
    flex:1;
    padding-left:6px;
    appearance:none;
  }
`

const FilePane = styled.main`
  display:flex;
  flex:1;
  min-height:0;
  background-color:white;
`

const FileScroll = styled.div`
  flex:1;
  overflow:hidden;
`

const FileTable = styled.table`
  width:455px;
  table-layout:fixed;
  border-spacing:0;
  th, td{
    height:24px;
    padding:0 6px;
    border-right:1px solid #e6effb;
    text-align:left;
    font-weight:normal;
    white-space:nowrap;
    overflow:hidden;
  }
  th{
    position:relative;
    height:26px;
    border-right-color:#dcdcdc;
  }
  td:first-child{
    padding:0 0 0 4px;
  }
  th:nth-child(2), td:nth-child(2){
    padding-right:7px;
    text-align:right;
  }
  th:nth-child(2){
    padding-right:5px;
  }
`

const SortMark = styled.svg`
  position:absolute;
  top:1px;
  left:calc(50% - 5px);
`

const FileName = styled.div`
  display:flex;
  align-items:center;
  gap:2px;
`

const ScrollBar = styled.div`
  display:flex;
  flex-direction:column;
  width:20px;
  background-color:#f0f0f0;
  button{
    height:21px;
  }
  button:last-child{
    margin-top:auto;
  }
`

const Thumb = styled.div`
  height:44%;
  background-color:#cdcdcd;
`

const BottomTabs = styled.div`
  display:flex;
  height:35px;
  border-top:3px solid #e5e5e5;
  border-bottom:1px solid #b5b5b5;
  background-color:#d5d5d5;
  box-shadow:inset 0 1px #b5b5b5;
`

const BottomTab = styled.button`
  min-width:42px;
  padding:0 6px;
  margin-top:1px;
  background-color:${(props) => (props.$active ? '#4d4d4d' : 'transparent')};
  color:${(props) => (props.$active ? 'white' : 'black')};
  font-weight:${(props) => (props.$active ? 'bold' : 'normal')};
`

const TransferPane = styled.section`
  height:89px;
  background-color:#f8f8f8;
`

const TransferTable = styled.table`
  width:100%;
  table-layout:fixed;
  border-spacing:0;
  background-color:#e5e5e5;
  th, td{
    height:26px;
    border-bottom:1px solid #cfdcec;
  }
`

const TransferHead = styled.th`
  padding:0 5px;
  border-right:1px solid #d3dde9;
  text-align:${(props) => (props.$center ? 'center' : 'left')};
  font-weight:normal;
  white-space:nowrap;
`

const StatusBar = styled.footer`
  position:relative;
  height:20px;
  padding:5px 6px 0;
  font-size:13px;
  line-height:18px;
  overflow:hidden;
  > svg{
    bottom:-4px;
  }
`

const Watermark = styled.div`
  position:absolute;
  right:7px;
  bottom:8px;
  font-family:"Liberation Sans", Arial, sans-serif;
  font-size:16px;
  color:rgba(255, 255, 255, 0.7);
  text-shadow:1px 1px 1px rgba(0, 0, 0, 0.22);
`

const Overlay = styled.div`
  position:absolute;
  inset:0;
  display:flex;
  align-items:center;
  justify-content:center;
  padding-bottom:1px;
`

const Dialog = styled.section`
  position:relative;
  width:648px;
  border:1px solid #6e6e6e;
  background-color:#f0f0f0;
  box-shadow:0 6px 18px rgba(0, 0, 0, 0.35);
`

const DialogTitle = styled.div`
  display:flex;
  align-items:center;
  height:38px;
  padding:0 14px 0 10px;
  border-bottom:1px solid #a0a0a0;
  background-color:white;
  h2{
    flex:1;
    padding-left:6px;
  }
`

const DialogToolbar = styled.div`
  display:flex;
  align-items:center;
  height:38px;
  padding:2px 6px 0 8px;
  border-bottom:1px solid #a0a0a0;
`

const TextButton = styled.button`
  display:flex;
  align-items:center;
  gap:3px;
  padding:0 ${(props) => props.$pad || 0}px;
  white-space:nowrap;
`

const CaretButton = styled(PlainButton)`
  height:24px;
  padding:0 3px 0 ${(props) => props.$left}px;
`

const IconButton = styled(PlainButton)`
  width:${(props) => (props.$wide ? 34 : 27)}px;
  height:24px;
`

const DialogSeparator = styled.span`
  width:8px;
  height:30px;
  background:linear-gradient(#8c8c8c, #8c8c8c) center / 1px 100% no-repeat;
`

const SearchBox = styled.div`
  display:flex;
  align-items:center;
  width:119px;
  height:16px;
  margin:0 0 4px auto;
  padding-right:2px;
  background-color:white;
  input{
    flex:1;
    min-width:0;
    height:16px;
    font-size:12px;
  }
`

const PathRow = styled.div`
  display:flex;
  align-items:center;
  height:28px;
  padding:5px 10px 3px 9px;
`

const PathLabel = styled.div`
  flex:1;
  height:20px;
  padding-left:4px;
  border:1px solid;
  border-color:#a0a0a0 white white #a0a0a0;
  line-height:16px;
`

const SessionBox = styled.div`
  height:263px;
  margin:0 9px;
  border:1px solid #828790;
  background-color:white;
`

const SessionTable = styled.table`
  width:604px;
  table-layout:fixed;
  border-spacing:0;
  th, td{
    height:20px;
    padding:0 6px;
    text-align:left;
    font-weight:normal;
    white-space:nowrap;
  }
  th{
    height:25px;
    padding:0 0 0 7px;
    border-right:1px solid #e0e0e0;
  }
  th svg{
    display:inline-block;
    margin-left:8px;
    vertical-align:middle;
  }
  td{
    font-size:13px;
  }
  td:first-child{
    padding:0 0 0 6px;
  }
`

const SessionRow = styled.tr`
  color:${(props) => (props.$selected ? 'white' : 'black')};
  td:not(:first-child){
    background-color:${(props) => (props.$selected ? '#0078d7' : 'transparent')};
  }
`

const SessionName = styled.div`
  display:flex;
  align-items:center;
  span{
    flex:1;
    padding-left:2px;
    background-color:${(props) => (props.$selected ? '#0078d7' : 'transparent')};
  }
`

const DialogFooter = styled.div`
  display:flex;
  gap:11px;
  height:52px;
  padding:15px 10px 0 9px;
`

const CheckLabel = styled.label`
  display:flex;
  flex:1;
  align-items:center;
  gap:3px;
  height:18px;
  input{
    appearance:none;
    width:16px;
    height:16px;
    margin:0;
    border:1px solid #333;
    background-color:white;
  }
  input:checked::after{
    content:"";
    display:block;
    width:5px;
    height:10px;
    margin:1px 0 0 5px;
    border:solid #333;
    border-width:0 1px 1px 0;
    transform:rotate(40deg);
  }
`

const DialogButton = styled.button`
  width:96px;
  height:26px;
  border:1px solid ${(props) => (props.$primary ? '#0078d7' : '#adadad')};
  background-color:${(props) => (props.$primary ? '#e5f1fb' : '#e1e1e1')};
`

const ResizeGrip = styled.svg`
  position:absolute;
  right:3px;
  bottom:2px;
`
